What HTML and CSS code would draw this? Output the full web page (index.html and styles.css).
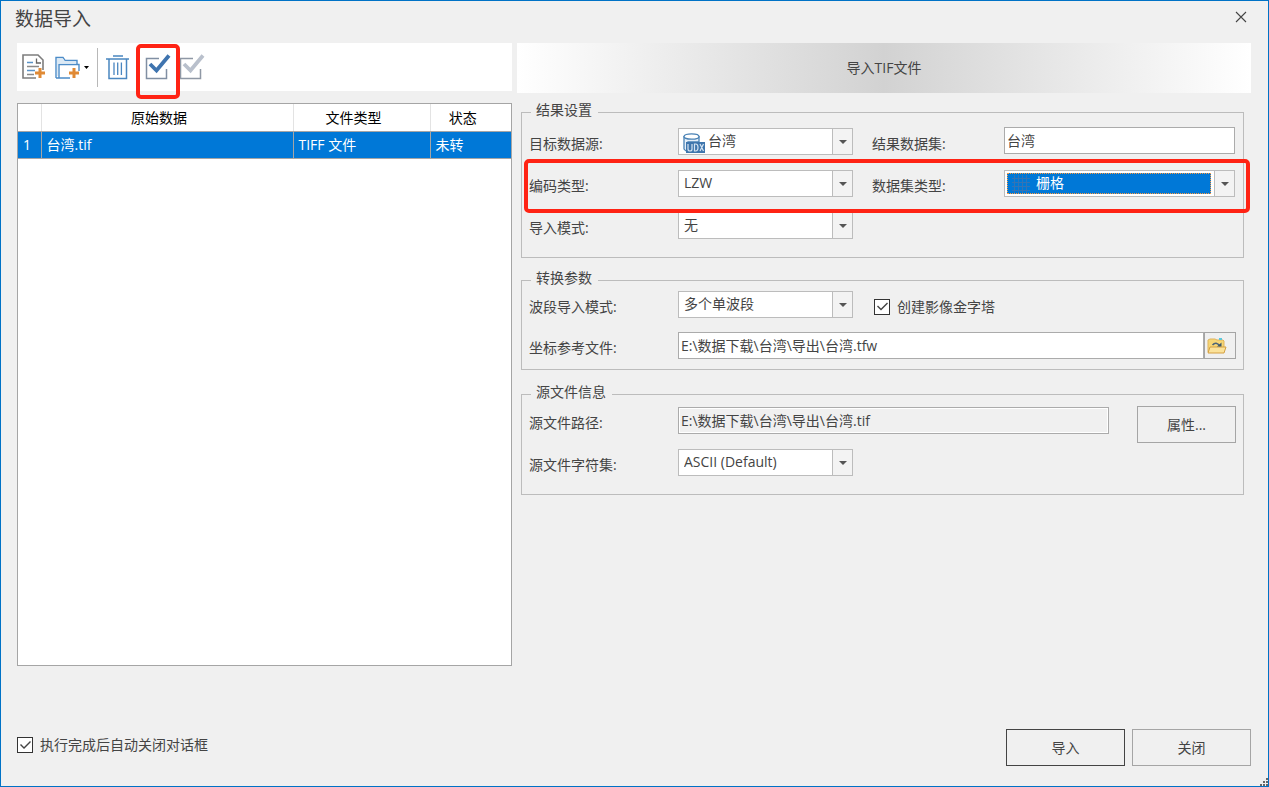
FILE: index.html
```html
<!DOCTYPE html>
<html lang="zh-CN">
<head>
<meta charset="utf-8">
<title>数据导入</title>
<link rel="stylesheet" href="styles.css">
</head>
<body>
<form class="dialog">
  <header class="titlebar">
    <h1 class="title">数据导入</h1>
    <button type="button" class="close" aria-label="关闭窗口">
      <svg width="12" height="12" viewBox="0 0 12 12"><path d="M1 1L11 11M11 1L1 11" stroke="#444" stroke-width="1.1"/></svg>
    </button>
  </header>

  <main class="content">
    <section class="sources">
      <div class="toolbar">
        <button type="button" class="tool" aria-label="添加文件">
          <svg width="25" height="26" viewBox="0 0 25 26" fill="none">
            <path d="M14 24H1V1H16L21 6V16" stroke="#7d7d7d" stroke-width="1.6"/>
            <path d="M14.500 4.500V9H19" stroke="#666" stroke-width="1.300"/>
            <path d="M5 8.500H11M5 16.500H13" stroke="#5a93c8" stroke-width="1.500"/>
            <path d="M5 12.500H17M5 20.500H12" stroke="#8a8a8a" stroke-width="1.500"/>
            <path d="M18 14V24M13 19H23" stroke="#e08a35" stroke-width="3"/>
          </svg>
        </button>
        <button type="button" class="tool tool-menu" aria-label="添加文件夹">
          <svg width="26" height="26" viewBox="0 0 26 26" fill="none">
            <path d="M1 24V3.500H8L10 6.500H22V10M4 24V10.500H24V17M1 24H15" stroke="#4c8cc8" stroke-width="1.400"/>
            <path d="M2 4.500H8L10 7.500H21V9.500H3V22H2Z" fill="#dbe9f5"/>
            <path d="M19 14V24M14 19H24" stroke="#e08a35" stroke-width="3"/>
          </svg>
          <svg width="5" height="3" viewBox="0 0 5 3"><path d="M0 0H5L2.500 3Z" fill="#000"/></svg>
        </button>
        <span class="separator"></span>
        <button type="button" class="tool" aria-label="删除">
          <svg width="24" height="26" viewBox="0 0 24 26" fill="none" stroke="#4a86c0">
            <path d="M7 2H17M0 5H23" stroke-width="1.500"/>
            <path d="M3 5V24.500H20.500V5" stroke-width="1.500"/>
            <path d="M8 8.500V21M11.700 8.500V21M15.400 8.500V21" stroke-width="1.300"/>
          </svg>
        </button>
        <button type="button" class="tool tool-marked" aria-label="全选">
          <svg width="26" height="26" viewBox="0 0 26 26" fill="none">
            <path d="M14 4.500H1.500V24.500H21.500V15" stroke="#818fa3" stroke-width="1.500"/>
            <path d="M5 10L11.500 16.500L24 1.500" stroke="#3f74af" stroke-width="3.800"/>
          </svg>
        </button>
        <button type="button" class="tool" aria-label="反选">
          <svg width="26" height="26" viewBox="0 0 26 26" fill="none">
            <path d="M14 4.500H1.500V24.500H21.500V15" stroke="#8f98a5" stroke-width="1.500"/>
            <path d="M5 10L11.500 16.500L24 1.500" stroke="#b9c0cc" stroke-width="3.800"/>
          </svg>
        </button>
      </div>
      <div class="list">
        <table class="files">
          <colgroup><col class="col-index"><col><col class="col-type"><col class="col-state"></colgroup>
          <thead><tr><th></th><th>原始数据</th><th>文件类型</th><th>状态</th></tr></thead>
          <tbody><tr><td>1</td><td>台湾.tif</td><td>TIFF 文件</td><td>未转</td></tr></tbody>
        </table>
      </div>
    </section>

    <section class="settings">
      <h2 class="banner">导入TIF文件</h2>

      <fieldset class="group group-result">
        <legend>结果设置</legend>
        <div class="fields">
          <label for="datasource">目标数据源:</label>
          <div class="combo combo-icon">
            <svg class="combo-picture" width="22" height="20" viewBox="0 0 22 20">
              <path d="M1 3V16Q2 18 5 18.500V9H16V3" fill="#e6eff8" stroke="#4a82b5" stroke-width="1.300"/>
              <ellipse cx="8.500" cy="3.500" rx="7.500" ry="2.700" fill="#fff" stroke="#4a82b5" stroke-width="1.300"/>
              <rect x="3" y="9" width="19" height="11" fill="#3f76ad"/>
              <path d="M5 11V16Q5 18 7 18Q9 18 9 16V11M11.500 11V18H12.500Q15 18 15 14.500Q15 11 12.500 11ZM17 11L20.500 18M20.500 11L17 18" fill="none" stroke="#d7e5f2" stroke-width="1.200"/>
            </svg>
            <select id="datasource"><option>台湾</option></select><span class="arrow"></span>
          </div>
          <label class="second" for="dataset">结果数据集:</label>
          <input class="text top" id="dataset" type="text" value="台湾">

          <label for="encoding">编码类型:</label>
          <div class="combo"><select id="encoding"><option>LZW</option></select><span class="arrow"></span></div>
          <label class="second" for="dataset-type">数据集类型:</label>
          <div class="combo combo-icon combo-active">
            <svg class="combo-picture" width="18" height="18" viewBox="0 0 18 18"><path d="M2.500 0V18M6.500 0V18M10.500 0V18M14.500 0V18M0 3.500H18M0 7.500H18M0 11.500H18M0 15.500H18" stroke="#3474b5" stroke-width="1"/></svg>
            <select id="dataset-type"><option>栅格</option></select><span class="arrow"></span>
          </div>

          <label for="import-mode">导入模式:</label>
          <div class="combo"><select id="import-mode"><option>无</option></select><span class="arrow"></span></div>
        </div>
        <span class="callout"></span>
      </fieldset>

      <fieldset class="group group-convert">
        <legend>转换参数</legend>
        <div class="fields">
          <label for="band-mode">波段导入模式:</label>
          <div class="combo"><select id="band-mode"><option>多个单波段</option></select><span class="arrow"></span></div>
          <label class="check check-field"><input type="checkbox" checked>创建影像金字塔</label>

          <label for="reference">坐标参考文件:</label>
          <div class="picker">
            <input class="text" id="reference" type="text" value="E:\数据下载\台湾\导出\台湾.tfw">
            <button type="button" class="browse" aria-label="浏览">
              <svg width="20" height="18" viewBox="0 0 20 18">
                <path d="M1 15V3L3 2H8L10 3H16L17 4V15Z" fill="#f6d675" stroke="#dfb45c"/>
                <path d="M12 1H15V3H12Z" fill="#5cc8dc"/>
                <path d="M1 16L3 10H19L17 16Z" fill="#fbe29a" stroke="#d4a042"/>
                <path d="M5.500 8Q9 4 13 9" fill="none" stroke="#4c6478" stroke-width="1.600"/><path d="M10 9.500H14.500V5.500Z" fill="#3f586c"/>
              </svg>
            </button>
          </div>
        </div>
      </fieldset>

      <fieldset class="group group-source">
        <legend>源文件信息</legend>
        <div class="fields">
          <label for="path">源文件路径:</label>
          <input class="text" id="path" type="text" readonly value="E:\数据下载\台湾\导出\台湾.tif">
          <button type="button" class="button properties">属性...</button>
          <label for="charset">源文件字符集:</label>
          <div class="combo"><select id="charset"><option>ASCII (Default)</option></select><span class="arrow"></span></div>
        </div>
      </fieldset>
    </section>
  </main>

  <footer class="footer">
    <label class="check"><input type="checkbox" checked>执行完成后自动关闭对话框</label>
    <button type="button" class="button default">导入</button>
    <button type="button" class="button">关闭</button>
  </footer>
  <svg class="grip" width="8" height="8" viewBox="0 0 8 8"><path d="M6 0h2v2h-2zM3 3h2v2h-2zM6 3h2v2h-2zM0 6h2v2h-2zM3 6h2v2h-2zM6 6h2v2h-2z" fill="#666"/></svg>
</form>
</body>
</html>
```

FILE: styles.css
```css
* { box-sizing: border-box; }

body {
  margin: 0;
  color: #444;
  font: 14px/20px "Open Sans", "Noto Sans CJK SC", sans-serif;
}

button, input, select { font: inherit; color: inherit; }
button { padding: 0; border: 0; background: none; }
svg { display: block; }

.dialog {
  position: relative;
  display: flex;
  flex-direction: column;
  min-height: 100vh;
  padding: 0 17px 20px 16px;
  border: 1px solid #0072c6;
  background: #f0f0f0;
}

.titlebar {
  display: flex;
  justify-content: space-between;
  align-items: flex-start;
  height: 42px;
}
.title { margin: 4px 0 0 -2px; font-size: 19px; line-height: 28px; font-weight: 400; }
.close { margin: 10px 4px 0 0; }

.content {
  flex: 1;
  display: grid;
  grid-template-columns: minmax(0, 495fr) minmax(0, 734fr);
  gap: 5px;
}

.sources { display: flex; flex-direction: column; gap: 12px; }
.toolbar {
  display: flex;
  align-items: center;
  gap: 8px;
  height: 48px;
  padding: 0 5px;
  background: #fff;
}
.tool-menu { display: flex; align-items: center; gap: 3px; }
.tool-marked { position: relative; margin-left: 7px; }
.tool-marked::after {
  content: "";
  position: absolute;
  inset: -10px -9px -19px;
  border: 4px solid #ff2314;
  border-radius: 5px;
}
.separator { width: 1px; height: 39px; background: #b8b8b8; }

.list { flex: 1; border: 1px solid #a5a5a5; background: #fff; }
.files { width: 100%; border-collapse: collapse; table-layout: fixed; }
.col-index { width: 23px; }
.col-type { width: 137px; }
.col-state { width: 81px; }
.files th, .files td {
  height: 27px;
  padding: 0 4px;
  border-right: 1px solid #a5a5a5;
  border-bottom: 1px solid #a5a5a5;
  font-weight: 400;
}
.files th { padding: 2px 20px 0 4px; border-right-color: #e3e3e3; color: #000; }
.files td { padding-left: 5px; background: #0078d7; color: #fff; }
.files th:last-child, .files td:last-child { border-right: 0; }

.settings { display: flex; flex-direction: column; }
.banner {
  margin: 0 0 9px;
  font-size: 14px;
  line-height: 50px;
  font-weight: 400;
  text-align: center;
  background: linear-gradient(90deg, #fff, #d2d2d2 50%, #fff);
}

.group {
  position: relative;
  min-width: 0;
  margin: 0 7px 12px 4px;
  padding: 0 8px 17px 7px;
  border: 1px solid #bcbcbc;
}
.group legend { margin-left: 2px; padding: 0 6px 4px 5px; line-height: 16px; }
.fields {
  display: grid;
  grid-template-columns: 149px 175px 151px minmax(0, 1fr);
  grid-auto-rows: 29px;
  align-items: center;
  row-gap: 13px;
}
.fields > label { padding-top: 4px; }
.fields > .second { padding-left: 19px; }
.fields > .check-field { padding-left: 21px; }
.group-result .fields { padding-top: 5px; }
.group-convert { margin-bottom: 14px; padding-bottom: 9px; }
.group-convert .fields { row-gap: 12px; }
.group-source .fields {
  grid-template-columns: 149px minmax(0, 1fr) 126px;
  row-gap: 13px;
  padding-top: 2px;
}
.group-source .combo { width: 175px; }

.text {
  width: 100%;
  min-width: 0;
  height: 27px;
  padding: 0 2px 2px;
  border: 1px solid #ababab;
  border-radius: 0;
  background: #fff;
}
.text[readonly] { background: #f0f0f0; box-shadow: inset 0 0 0 1px #fff; }
.top { align-self: start; }

.combo {
  position: relative;
  display: flex;
  height: 27px;
  border: 1px solid #bcbcbc;
  background: #fff;
}
.combo select {
  flex: 1;
  min-width: 0;
  padding: 0 5px 1px;
  border: 0;
  border-radius: 0;
  background: transparent;
  appearance: none;
}
.combo-icon select { padding-left: 29px; }
.combo-picture { position: absolute; left: 4px; top: 4px; pointer-events: none; }
.combo-active select {
  margin: 2px 3px 2px 2px;
  outline: 1px dotted #ff9b3d;
  outline-offset: -1px;
  background: #0078d7;
  color: #fff;
}
.combo-active .combo-picture { left: 7px; z-index: 1; }
.arrow {
  display: grid;
  place-items: center;
  width: 20px;
  border-left: 1px solid #bcbcbc;
  background: #f3f3f3;
  pointer-events: none;
}
.arrow::after {
  content: "";
  border: 4px solid transparent;
  border-top-color: #555;
  border-bottom: 0;
}

.callout {
  position: absolute;
  inset: 37px -7px 44px 2px;
  border: 4px solid #ff2314;
  border-radius: 5px;
  pointer-events: none;
}

.check { display: flex; align-items: center; gap: 7px; }
.check input {
  width: 16px;
  height: 16px;
  margin: 0;
  border: 1px solid #333;
  background: #fff;
  appearance: none;
}
.check input:checked::before {
  content: "";
  display: block;
  height: 14px;
  background: #444;
  clip-path: polygon(2px 7px, 3px 6px, 6px 9px, 12px 3px, 13px 4px, 6px 11px);
}
.check-field { grid-column: span 2; }

.picker { grid-column: span 3; display: flex; margin-right: -1px; }
.browse { flex: none; width: 32px; padding-left: 2px; border: 1px solid #a5a5a5; }

.button { width: 119px; height: 37px; border: 1px solid #a5a5a5; background: #f0f0f0; }
.default { border-color: #444; }
.properties { grid-row: span 2; place-self: start end; width: 99px; margin-right: -1px; }

.footer { display: flex; gap: 7px; margin-top: 63px; }
.footer .check { margin-right: auto; padding-bottom: 5px; }

.grip { position: absolute; right: 0; bottom: 0; }
```
